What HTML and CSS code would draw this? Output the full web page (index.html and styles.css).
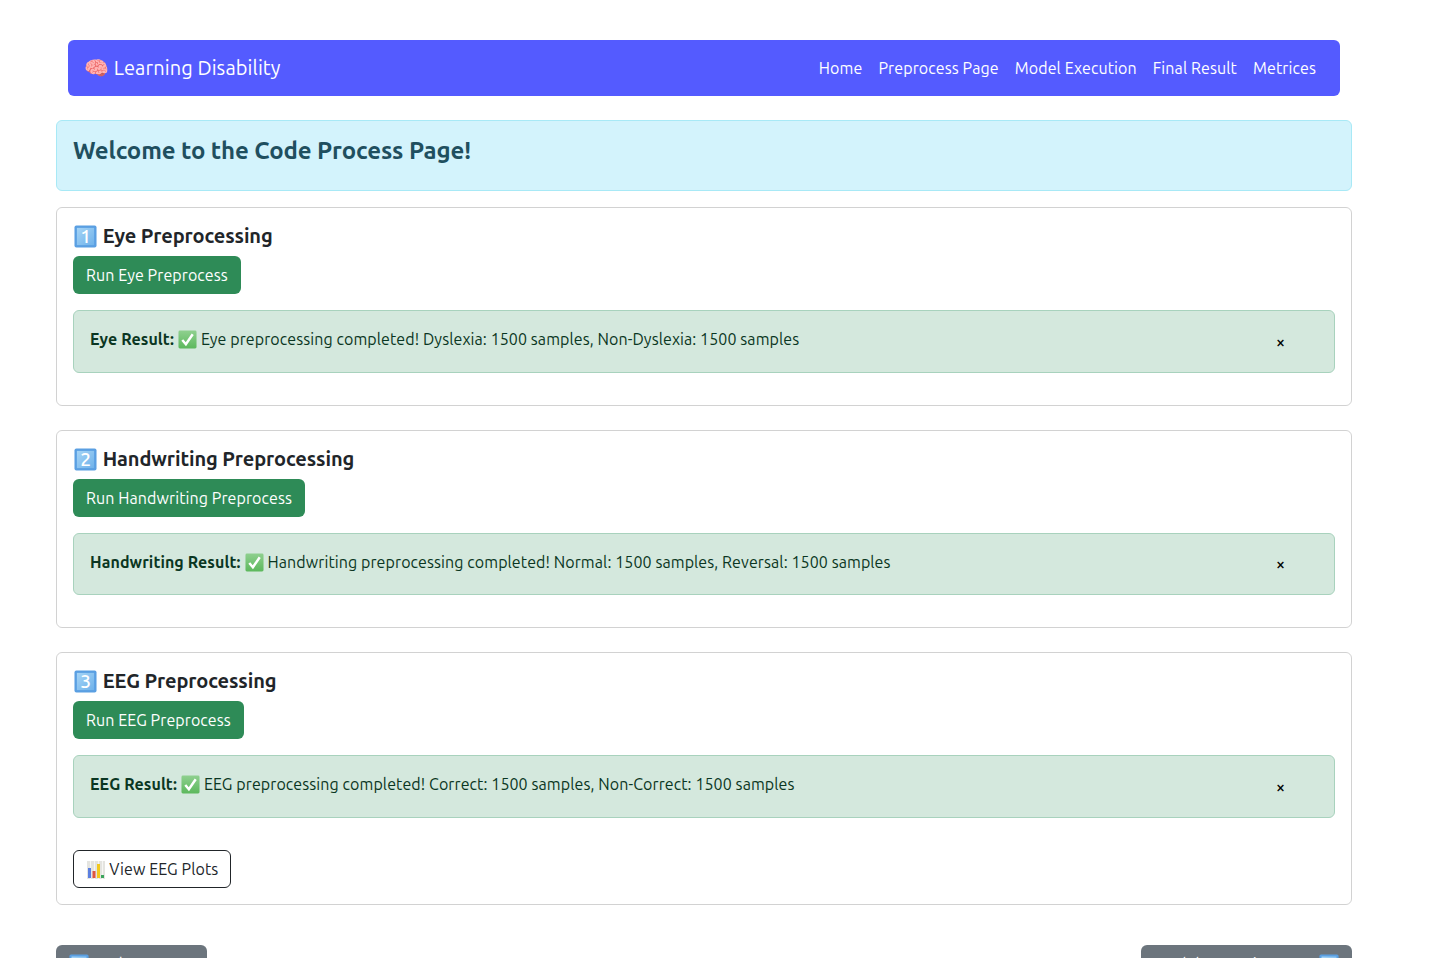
FILE: index.html
```html
<!DOCTYPE html>
<html lang="en">
<head>
<meta charset="utf-8">
<title>Code Process</title>
<link rel="stylesheet" href="styles.css">
</head>
<body>
<div class="page">
  <nav class="navbar">
    <a class="brand" href="#">🧠 Learning Disability</a>
    <div class="nav-links">
      <a href="#">Home</a>
      <a href="#">Preprocess Page</a>
      <a href="#">Model Execution</a>
      <a href="#">Final Result</a>
      <a href="#">Metrices</a>
    </div>
  </nav>
  <div class="welcome"><h2>Welcome to the Code Process Page!</h2></div>

  <section class="card">
    <h4><svg class="key" viewBox="0 0 24 24"><use href="#keybg"/><text x="12" y="19" class="keynum">1</text></svg> Eye Preprocessing</h4>
    <button class="btn btn-green">Run Eye Preprocess</button>
    <div class="result">
      <p><strong>Eye Result:</strong> <svg class="tick" viewBox="0 0 20 20"><use href="#tickbg"/></svg> Eye preprocessing completed! Dyslexia: 1500 samples, Non-Dyslexia: 1500 samples</p>
      <span class="close">×</span>
    </div>
  </section>

  <section class="card">
    <h4><svg class="key" viewBox="0 0 24 24"><use href="#keybg"/><text x="12" y="19" class="keynum">2</text></svg> Handwriting Preprocessing</h4>
    <button class="btn btn-green">Run Handwriting Preprocess</button>
    <div class="result">
      <p><strong>Handwriting Result:</strong> <svg class="tick" viewBox="0 0 20 20"><use href="#tickbg"/></svg> Handwriting preprocessing completed! Normal: 1500 samples, Reversal: 1500 samples</p>
      <span class="close">×</span>
    </div>
  </section>

  <section class="card">
    <h4><svg class="key" viewBox="0 0 24 24"><use href="#keybg"/><text x="12" y="19" class="keynum">3</text></svg> EEG Preprocessing</h4>
    <button class="btn btn-green">Run EEG Preprocess</button>
    <div class="result">
      <p><strong>EEG Result:</strong> <svg class="tick" viewBox="0 0 20 20"><use href="#tickbg"/></svg> EEG preprocessing completed! Correct: 1500 samples, Non-Correct: 1500 samples</p>
      <span class="close">×</span>
    </div>
    <button class="btn btn-outline"><svg class="chart" viewBox="0 0 18 18"><rect width="18" height="18" fill="#e4e4e0"/><path d="M3.5 0v18M7.5 0v18M11.5 0v18M15.5 0v18" stroke="#f6f6f4" stroke-width="1"/><rect x="1" y="7" width="3" height="10" fill="#5b7fe0"/><rect x="5.5" y="10" width="3" height="7" fill="#e0553f"/><rect x="10" y="3" width="3" height="14" fill="#f2c81e"/><rect x="14" y="14" width="3" height="3" fill="#3ba55d"/></svg> View EEG Plots</button>
  </section>

  <div class="footer-nav">
    <button class="btn btn-grey"><svg class="key" viewBox="0 0 24 24"><use href="#keybg"/></svg> Back to Home</button>
    <button class="btn btn-grey">Model Execution Page <svg class="key" viewBox="0 0 24 24"><use href="#keybg"/></svg></button>
  </div>
</div>
<svg class="defs" aria-hidden="true">
  <defs>
    <linearGradient id="keygrad" x1="0" y1="0" x2="1" y2="1">
      <stop offset="0" stop-color="#a5d4f6"/>
      <stop offset="1" stop-color="#6fb2ea"/>
    </linearGradient>
    <linearGradient id="tickgrad" x1="0" y1="0" x2="0" y2="1">
      <stop offset="0" stop-color="#8fd08f"/>
      <stop offset="1" stop-color="#5cb85c"/>
    </linearGradient>
    <g id="keybg">
      <rect x="0.5" y="0.5" width="23" height="23" rx="2" fill="#5a9fe2"/>
      <rect x="3" y="3" width="18" height="18" fill="url(#keygrad)"/>
    </g>
    <g id="tickbg">
      <rect x="0.5" y="0.5" width="19" height="19" rx="1.5" fill="url(#tickgrad)"/>
      <path d="M4.5 10.5l3.8 4.5L15.5 4.5" fill="none" stroke="#fff" stroke-width="2.6"/>
    </g>
  </defs>
</svg>
</body>
</html>
```
FILE: styles.css
```css
* { box-sizing: border-box; }
html, body { margin: 0; height: 958px; overflow: hidden; background: #fff; }
body {
  font-family: "Ubuntu", "Noto Sans", "Noto Color Emoji", sans-serif;
  font-size: 16px;
  line-height: 1.5;
  letter-spacing: .09px;
  color: #212529;
}
.defs { position: absolute; width: 0; height: 0; }
.page { width: 1296px; margin-left: 56px; padding-top: 40px; }
.navbar {
  height: 56px;
  margin: 0 12px 24px;
  padding: 0 16px;
  background: #545bff;
  border-radius: 6px;
  display: flex;
  align-items: center;
  justify-content: space-between;
}
.brand { color: #fff; font-size: 20px; letter-spacing: .1px; text-decoration: none; }
.nav-links { display: flex; letter-spacing: .11px; }
.nav-links a { color: #fff; text-decoration: none; padding: 0 8px; }
.welcome {
  height: 71px;
  padding: 16px;
  margin-bottom: 16px;
  background: #d3f3fc;
  border: 1px solid #a8e9f6;
  border-radius: 6px;
}
.welcome h2 { margin: 0; font-size: 24px; font-weight: 600; line-height: 28.8px; letter-spacing: -.12px; color: #1f4f5f; }
.card {
  padding: 16px;
  margin-bottom: 24px;
  border: 1px solid rgba(0,0,0,.176);
  border-radius: 6px;
}
.card h4 { margin: 0 0 8px; font-size: 20px; font-weight: 600; line-height: 24px; letter-spacing: -.1px; }
.key { width: 23px; height: 23px; margin: 0 1px; vertical-align: -5px; }
.keynum { fill: #fff; font-size: 20px; font-weight: 500; text-anchor: middle; }
.chart { width: 18px; height: 18px; margin: 0 .5px 0 1px; vertical-align: -4px; }
.tick { width: 19px; height: 19px; margin-left: .5px; vertical-align: -4px; }
.btn {
  display: block;
  font: inherit;
  letter-spacing: inherit;
  height: 38px;
  padding: 6px 12px;
  border-radius: 6px;
  border: 1px solid transparent;
  white-space: nowrap;
}
.btn-green { background: #2e8b57; color: #fff; }
.btn-outline { background: #fff; color: #212529; border-color: #212529; margin-top: 32px; }
.btn-grey { background: #6c757d; color: #fff; }
.btn-grey .key { width: 20px; height: 20px; margin: 0; vertical-align: -4px; }
.result {
  position: relative;
  margin: 16px 0;
  padding: 16px 48px 16px 16px;
  background: #d4e8dd;
  border: 1px solid #a8d2bd;
  border-radius: 6px;
  color: #0a3622;
}
.result p { margin: 0 0 4.5px; }
.close { position: absolute; right: 49px; top: 18.5px; font-weight: 500; color: #000; }
.footer-nav { display: flex; justify-content: space-between; margin-top: 40px; }
```
